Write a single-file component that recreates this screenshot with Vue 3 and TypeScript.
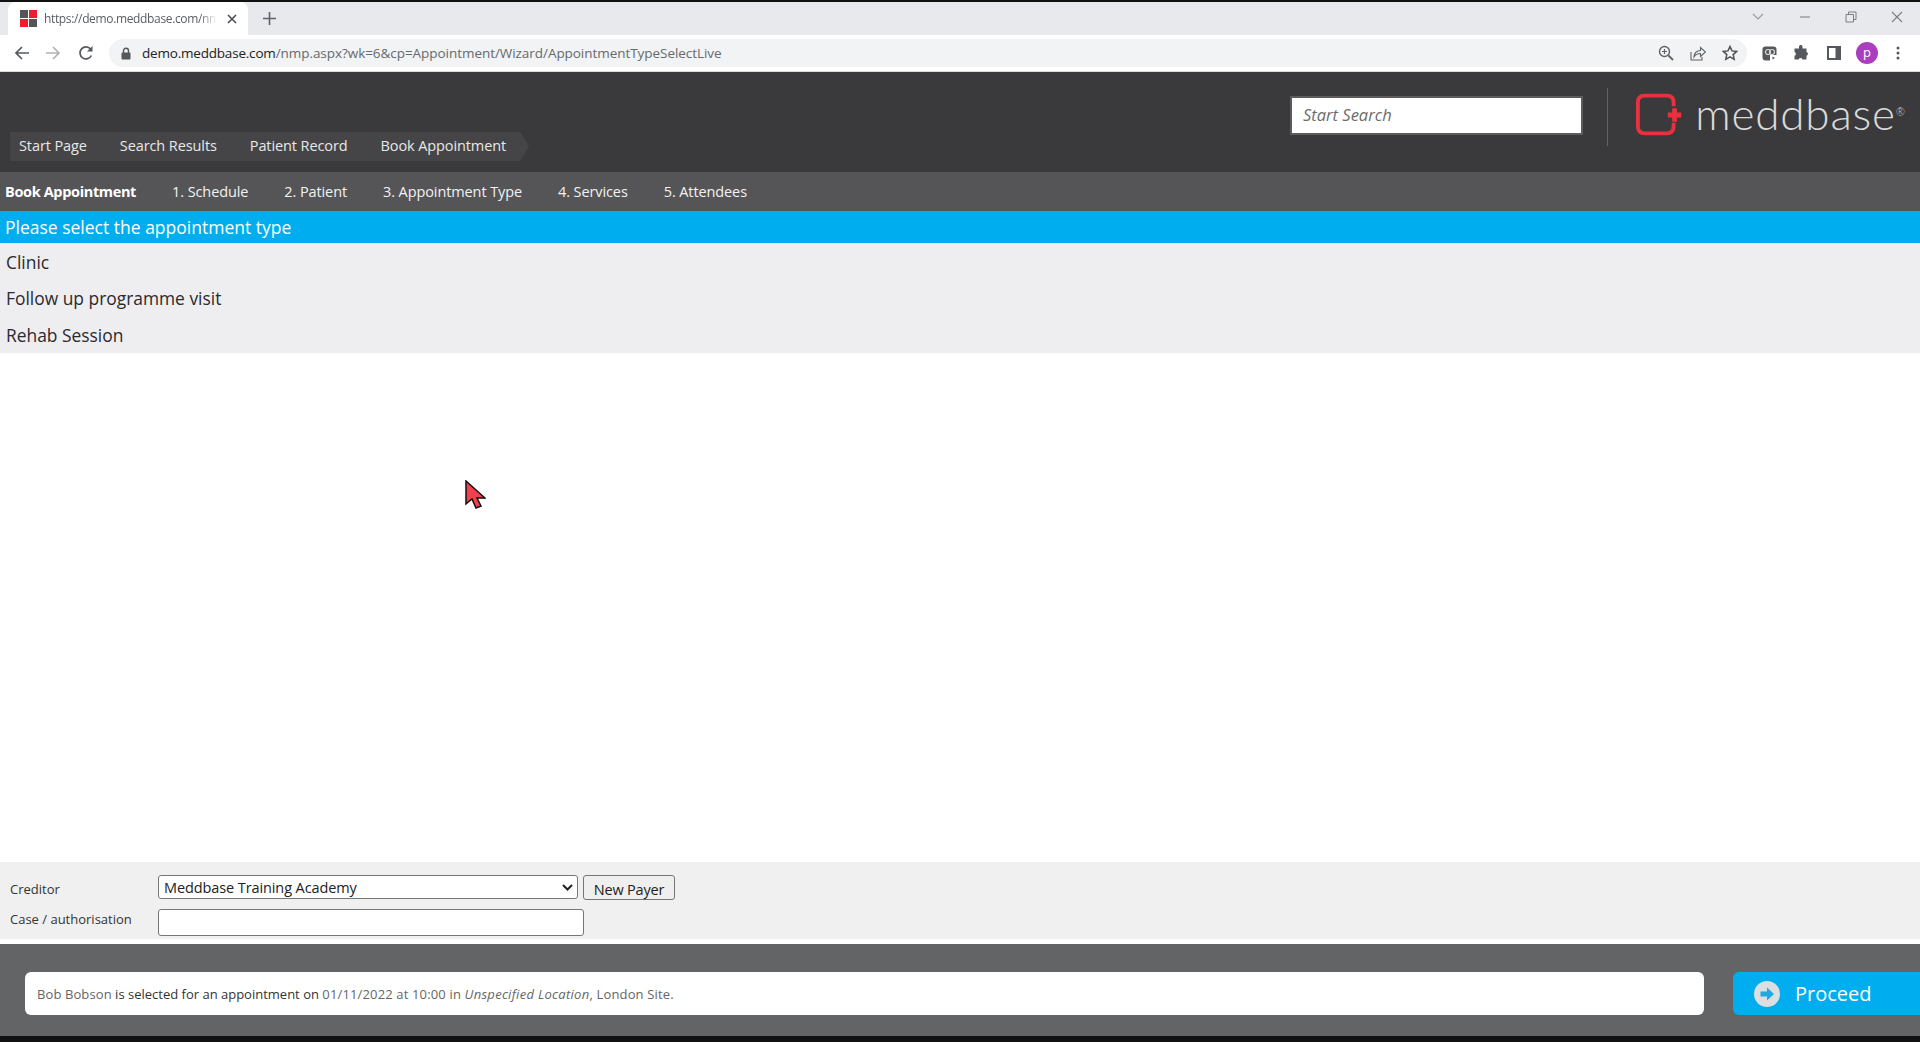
<script setup lang="ts">
const crumbs: string[] = ['Start Page', 'Search Results', 'Patient Record', 'Book Appointment']
const steps: string[] = ['1. Schedule', '2. Patient', '3. Appointment Type', '4. Services', '5. Attendees']
const types: string[] = ['Clinic', 'Follow up programme visit', 'Rehab Session']
</script>

<template>
  <div class="page">
    <div class="tabstrip">
      <div class="tab">
        <svg class="favicon" width="17" height="17" viewBox="0 0 17 17">
          <rect x="0" y="0" width="8" height="8" fill="#555558" />
          <rect x="9" y="0" width="8" height="8" fill="#ee1c2e" />
          <rect x="0" y="9" width="8" height="8" fill="#ee1c2e" />
          <rect x="9" y="9" width="8" height="8" fill="#555558" />
        </svg>
        <span class="tab-title">https://demo.meddbase.com/nm</span>
        <svg class="tab-close" width="10" height="10" viewBox="0 0 10 10"><path d="M1 1l8 8M9 1l-8 8" stroke="#4a4c50" stroke-width="1.6" /></svg>
      </div>
      <svg class="newtab" width="13" height="13" viewBox="0 0 13 13"><path d="M6.5 0v13M0 6.5h13" stroke="#5f6368" stroke-width="1.6" /></svg>
      <div class="winctl">
        <svg width="14" height="10" viewBox="0 0 14 10"><path d="M2 2l5 5 5-5" fill="none" stroke="#9a9ca0" stroke-width="1.2" /></svg>
        <svg width="12" height="10" viewBox="0 0 12 10"><path d="M1 5h10" stroke="#8a8c90" stroke-width="1.2" /></svg>
        <svg width="12" height="12" viewBox="0 0 12 12"><path d="M1 3.5h7.5v7.5H1zM3.5 3.5V1H11v7.5H8.5" fill="none" stroke="#7c7e82" stroke-width="1" /></svg>
        <svg width="12" height="12" viewBox="0 0 12 12"><path d="M1 1l10 10M11 1L1 11" stroke="#7c7e82" stroke-width="1.1" /></svg>
      </div>
    </div>

    <div class="toolbar">
      <svg width="16" height="16" viewBox="0 0 16 16"><path d="M15 8H2M8 2L2 8l6 6" fill="none" stroke="#55585c" stroke-width="1.7" /></svg>
      <svg class="fwd" width="16" height="16" viewBox="0 0 16 16"><path d="M1 8h13M8 2l6 6-6 6" fill="none" stroke="#b0b2b6" stroke-width="1.7" /></svg>
      <svg class="reload" width="16" height="16" viewBox="0 0 16 16"><path d="M13.4 10.5A6 6 0 1 1 12.6 4" fill="none" stroke="#55585c" stroke-width="1.7" /><path d="M14.5 1v5.5H9z" fill="#55585c" /></svg>
      <div class="omnibox">
        <svg width="10" height="13" viewBox="0 0 10 13"><path d="M2.5 6V3.8a2.5 2.5 0 0 1 5 0V6" fill="none" stroke="#55585c" stroke-width="1.4" /><rect x="0.5" y="5.5" width="9" height="7" rx="1" fill="#55585c" /></svg>
        <span class="url"><span class="url-host">demo.meddbase.com</span>/nmp.aspx?wk=6&amp;cp=Appointment/Wizard/AppointmentTypeSelectLive</span>
        <div class="omni-icons">
          <svg width="16" height="16" viewBox="0 0 16 16"><circle cx="6.5" cy="6.5" r="5" fill="none" stroke="#5f6368" stroke-width="1.4" /><path d="M10.5 10.5L15 15" stroke="#5f6368" stroke-width="1.8" /><path d="M4 6.5h5M6.5 4v5" stroke="#5f6368" stroke-width="1.2" /></svg>
          <svg width="16" height="16" viewBox="0 0 16 16"><path d="M1 7v8h11v-3" fill="none" stroke="#5f6368" stroke-width="1.1" /><path d="M4 12c0-4 3-6.500 6.500-6.500V2.500L15.500 7l-5 4.500V8.500C8 8.500 5.500 9.500 4 12z" fill="none" stroke="#5f6368" stroke-width="1.1" /></svg>
          <svg width="16" height="16" viewBox="0 0 16 16"><path d="M8 1.500l2 4.400 4.700.5-3.500 3.200 1 4.700L8 11.900l-4.200 2.400 1-4.700L1.300 6.400 6 5.900z" fill="none" stroke="#4f5256" stroke-width="1.5" /></svg>
        </div>
      </div>
      <div class="tool-icons">
        <svg width="15" height="15" viewBox="0 0 15 15"><rect x="0.500" y="0.500" width="14" height="14" rx="3" fill="#55575a" /><circle cx="6" cy="6" r="2.500" fill="none" stroke="#d8d8d8" stroke-width="1.2" /><circle cx="10" cy="6" r="2.500" fill="none" stroke="#d8d8d8" stroke-width="1.2" /><rect x="8" y="9" width="7" height="6" fill="#fff" /><path d="M10.500 10.500v3l2.500-1.500z" fill="#55575a" /></svg>
        <svg width="16" height="16" viewBox="0 0 16 16"><path d="M6 1.500a1.800 1.800 0 0 1 3.500 0V3.500H13.500V7a1.900 1.900 0 0 1 0 3.700V14.500H9.500a2 2 0 0 0-3.800 0H1.500V10.800a2 2 0 0 0 0-3.800V3.500H6z" fill="#55585c" /></svg>
        <svg class="sidebar" width="14" height="14" viewBox="0 0 14 14"><rect x="1" y="1" width="12" height="12" fill="#fff" stroke="#55585c" stroke-width="2" /><rect x="8.500" y="1" width="4.500" height="12" fill="#55585c" /></svg>
        <div class="avatar">p</div>
        <svg class="dots" width="4" height="14" viewBox="0 0 4 14"><circle cx="2" cy="2" r="1.500" fill="#55585c" /><circle cx="2" cy="7" r="1.500" fill="#55585c" /><circle cx="2" cy="12" r="1.500" fill="#55585c" /></svg>
      </div>
    </div>

    <header class="topbar">
      <nav class="crumbs">
        <span v-for="c in crumbs" :key="c" class="crumb">{{ c }}</span>
      </nav>
      <div class="top-right">
        <input class="search" type="text" placeholder="Start Search" />
        <div class="divider"></div>
        <div class="logo">
          <svg width="49" height="45" viewBox="0 0 49 45">
            <path d="M40 14V10Q40 3 33 3H10Q3 3 3 10V35Q3 42 10 42H33Q40 42 40 35V31" fill="none" stroke="#e8303f" stroke-width="4" />
            <path d="M41 16v14M34 23h14" stroke="#e8303f" stroke-width="5" />
          </svg>
          <span class="logo-text">meddbase<sup>®</sup></span>
        </div>
      </div>
    </header>

    <div class="stepbar">
      <strong class="step-title">Book Appointment</strong>
      <span v-for="s in steps" :key="s" class="step">{{ s }}</span>
    </div>

    <div class="banner">Please select the appointment type</div>
    <ul class="types">
      <li v-for="t in types" :key="t">{{ t }}</li>
    </ul>

    <div class="spacer"></div>

    <section class="form">
      <div class="form-row">
        <label>Creditor</label>
        <div class="select-wrap">
          <select class="creditor"><option>Meddbase Training Academy</option></select>
          <svg class="select-arrow" width="11" height="7" viewBox="0 0 11 7"><path d="M1 1l4.500 4.500L10 1" fill="none" stroke="#222" stroke-width="2" /></svg>
        </div>
        <button class="newpayer" type="button">New Payer</button>
      </div>
      <div class="form-row second">
        <label>Case / authorisation</label>
        <input class="auth" type="text" />
      </div>
    </section>

    <footer class="footer">
      <div class="message">
        <span class="g">Bob Bobson</span> is selected for an appointment on <span class="g date">01/11/2022 at 10:00 in <em class="place">Unspecified Location</em>, London Site.</span>
      </div>
      <button class="proceed" type="button">
        <svg width="26" height="26" viewBox="0 0 26 26"><circle cx="13" cy="13" r="13" fill="#dcdfe2" /><path d="M6.500 10.500h6.500V6.500l7 6.500-7 6.500v-4H6.500z" fill="#1fa9e4" /></svg>
        <span>Proceed</span>
      </button>
    </footer>
    <div class="bottomline"></div>

    <svg class="cursor" width="21" height="30" viewBox="0 0 21 30">
      <path d="M1 1V24L7 19L11 28L16 26L12 18H20z" fill="#f2404f" stroke="#111" stroke-width="1.500" />
    </svg>
  </div>
</template>

<style>
html, body { margin: 0; background: #fff; }
</style>

<style scoped>
.page {
  position: relative;
  width: 1920px;
  height: 1042px;
  overflow: hidden;
  display: flex;
  flex-direction: column;
  background: #fff;
  font-family: "Open Sans", "Noto Sans", sans-serif;
  color: #333;
}
.tabstrip {
  height: 33px;
  flex: none;
  border-top: 2px solid #111;
  background: #e7e9ed;
  display: flex;
  align-items: flex-end;
  padding-left: 8px;
}
.tab {
  width: 240px;
  height: 33px;
  box-sizing: border-box;
  background: #fff;
  border-radius: 8px 8px 0 0;
  display: flex;
  align-items: center;
  padding: 0 11px 0 12px;
}
.favicon { flex: none; margin-right: 7px; }
.tab-title {
  flex: 1;
  min-width: 0;
  white-space: nowrap;
  font-size: 12px;
  letter-spacing: -0.35px;
  color: #5a5c60;
  -webkit-mask-image: linear-gradient(to right, #000 90%, transparent);
  mask-image: linear-gradient(to right, #000 90%, transparent);
}
.tab-close { flex: none; margin-left: 10px; }
.newtab { margin: 0 0 10px 15px; }
.winctl {
  margin-left: auto;
  height: 33px;
  display: flex;
  align-items: center;
  gap: 34px;
  padding: 0 17px 2px 0;
}
.toolbar {
  height: 36px;
  flex: none;
  display: flex;
  align-items: center;
  background: #fff;
  padding: 0 15px 0 14px;
  border-bottom: 1px solid #dcdcdc;
}
.fwd { margin-left: 15px; }
.reload { margin-left: 17px; }
.omnibox {
  margin-left: 15px;
  width: 1638px;
  height: 28px;
  box-sizing: border-box;
  background: #f1f3f4;
  border-radius: 14px;
  display: flex;
  align-items: center;
  padding: 0 9px 0 12px;
}
.url {
  margin-left: 11px;
  font-size: 13.500px;
  letter-spacing: -0.050px;
  color: #666a6e;
  white-space: nowrap;
}
.url-host { color: #222; letter-spacing: -0.200px; }
.omni-icons {
  margin-left: auto;
  display: flex;
  align-items: center;
  gap: 16px;
}
.tool-icons {
  display: flex;
  align-items: center;
  margin-left: 15px;
  gap: 16px;
  flex: none;
}
.sidebar { margin-left: 2px; margin-right: -1px; }
.avatar {
  width: 22px;
  height: 22px;
  border-radius: 50%;
  background: #a93fbd;
  color: #fff;
  font-size: 13px;
  line-height: 20px;
  text-align: center;
}
.dots { margin-left: 2px; }
.topbar {
  height: 100px;
  flex: none;
  box-sizing: border-box;
  background: #3a3a3c;
  display: flex;
  justify-content: space-between;
  padding: 16px 15px 0 10px;
}
.crumbs {
  display: flex;
  align-self: flex-end;
  margin-bottom: 11px;
}
.crumb {
  height: 29px;
  line-height: 28px;
  font-size: 14.500px;
  letter-spacing: -0.100px;
  color: #e8e8e8;
  background: #454547;
  white-space: nowrap;
  padding: 0 23px 0 20px;
  margin-right: -10px;
  clip-path: polygon(0 0, calc(100% - 9px) 0, 100% 50%, calc(100% - 9px) 100%, 0 100%, 9px 50%);
}
.crumb:first-child {
  padding-left: 9px;
  clip-path: polygon(0 0, calc(100% - 9px) 0, 100% 50%, calc(100% - 9px) 100%, 0 100%);
}
.top-right {
  display: flex;
  align-items: flex-start;
}
.search {
  width: 293px;
  height: 39px;
  margin-top: 8px;
  box-sizing: border-box;
  border: 2px solid #5c5c5e;
  outline: 0;
  background: #fff;
  padding: 0 11px 2px;
  font: italic 16.500px "Open Sans", sans-serif;
}
.search::placeholder { color: #6c6c6e; opacity: 1; }
.divider {
  width: 1px;
  height: 58px;
  background: #626264;
  margin: 0 27px 0 24px;
}
.logo {
  display: flex;
  align-items: center;
  gap: 13px;
  margin-top: 4px;
  width: 270px;
}
.logo-text {
  font-family: Lato, "Open Sans", sans-serif;
  font-weight: 300;
  font-size: 44px;
  line-height: 44px;
  margin-top: -4px;
  letter-spacing: 0.800px;
  color: #dadada;
  white-space: nowrap;
}
.logo-text sup {
  font-size: 11px;
  line-height: 0;
  vertical-align: 14px;
  letter-spacing: 0;
}
.stepbar {
  height: 39px;
  flex: none;
  background: #555557;
  display: flex;
  align-items: center;
  padding-left: 5px;
  color: #f2f2f2;
  font-size: 14.500px;
  letter-spacing: -0.100px;
  white-space: nowrap;
}
.step-title { color: #fff; font-weight: 700; margin-right: 36px; letter-spacing: -0.350px; }
.step { margin-right: 36px; }
.banner {
  height: 32px;
  line-height: 32px;
  flex: none;
  background: #00aeef;
  color: #fff;
  font-size: 17.500px;
  padding-left: 5px;
}
.types {
  list-style: none;
  margin: 0;
  padding: 1px 0 0;
  box-sizing: border-box;
  flex: none;
  background: #eeeef0;
  height: 110px;
  display: flex;
  flex-direction: column;
}
.types li {
  height: 36.400px;
  line-height: 36.400px;
  padding-left: 6px;
  font-size: 17.400px;
  color: #2a2a2e;
}
.spacer { flex: 1; }
.form {
  flex: none;
  height: 77px;
  box-sizing: border-box;
  background: #f0f0f0;
  padding: 13px 0 0 10px;
}
.form-row {
  display: flex;
  align-items: flex-start;
}
.form-row.second { margin-top: 6px; }
.form-row label {
  width: 148px;
  flex: none;
  font-size: 13px;
  line-height: 28px;
  color: #333;
}
.second label { line-height: 21px; }
.select-wrap {
  position: relative;
  width: 420px;
  height: 24px;
}
.select-arrow {
  position: absolute;
  right: 5px;
  top: 9px;
  pointer-events: none;
}
.creditor {
  appearance: none;
  -webkit-appearance: none;
  display: block;
  width: 100%;
  height: 24px;
  box-sizing: border-box;
  background: #fff;
  border: 1px solid #767676;
  border-radius: 3px;
  font: 14.500px "Open Sans", sans-serif;
  letter-spacing: -0.100px;
  color: #222;
  padding: 0 0 0 5px;
}
.newpayer {
  width: 92px;
  height: 25px;
  margin-left: 5px;
  box-sizing: border-box;
  background: #efefef;
  border: 1px solid #767676;
  border-radius: 3px;
  padding: 3px 0 0;
  font: 14.500px "Open Sans", sans-serif;
  letter-spacing: -0.200px;
  color: #222;
}
.auth {
  width: 426px;
  height: 27px;
  box-sizing: border-box;
  background: #fff;
  border: 1px solid #767676;
  border-radius: 3px;
  outline: 0;
}
.footer {
  flex: none;
  height: 92px;
  margin-top: 5px;
  box-sizing: border-box;
  background: #636466;
  padding-top: 28px;
  display: flex;
  align-items: flex-start;
}
.message {
  width: 1679px;
  height: 43px;
  margin-left: 25px;
  box-sizing: border-box;
  background: #fff;
  border-radius: 6px;
  padding-left: 12px;
  line-height: 44px;
  font-size: 13px;
  color: #333;
  white-space: nowrap;
}
.g { color: #666; letter-spacing: 0.100px; }
.date { letter-spacing: 0.150px; }
.place { letter-spacing: 0.300px; }
.proceed {
  flex: 1;
  height: 43px;
  margin-left: 29px;
  border: 0;
  border-radius: 6px 0 0 6px;
  background: #00aeef;
  color: #fff;
  display: flex;
  align-items: center;
  gap: 15px;
  padding: 0 0 0 21px;
  font: 20px "Open Sans", sans-serif;
}
.bottomline {
  flex: none;
  height: 6px;
  background: #111;
}
.cursor {
  position: absolute;
  left: 465px;
  top: 480px;
}
</style>
